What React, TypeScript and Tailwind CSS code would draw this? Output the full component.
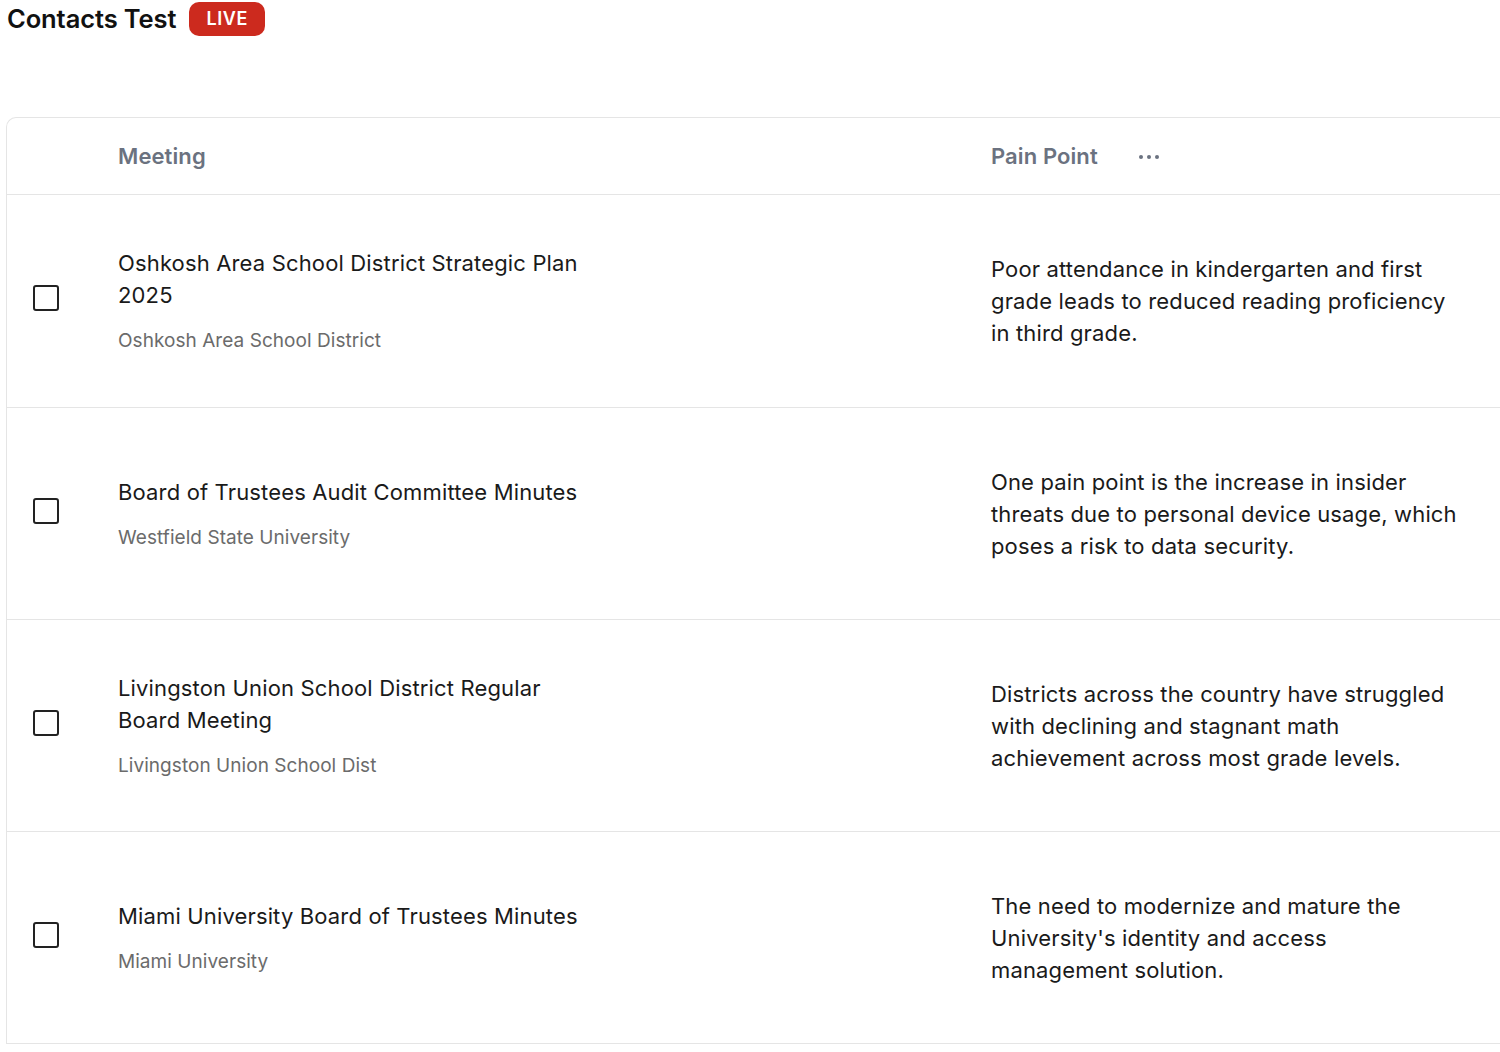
import React from "react";

const rows = [
  {
    title: "Oshkosh Area School District Strategic Plan 2025",
    org: "Oshkosh Area School District",
    pain: "Poor attendance in kindergarten and first grade leads to reduced reading proficiency in third grade.",
  },
  {
    title: "Board of Trustees Audit Committee Minutes",
    org: "Westfield State University",
    pain: "One pain point is the increase in insider threats due to personal device usage, which poses a risk to data security.",
  },
  {
    title: "Livingston Union School District Regular Board Meeting",
    org: "Livingston Union School Dist",
    pain: "Districts across the country have struggled with declining and stagnant math achievement across most grade levels.",
  },
  {
    title: "Miami University Board of Trustees Minutes",
    org: "Miami University",
    pain: "The need to modernize and mature the University's identity and access management solution.",
  },
];

export default function App() {
  return (
    <div className="min-h-[1052px] bg-white overflow-hidden" style={{ fontFamily: "Inter, 'Noto Sans', sans-serif" }}>
      <div className="flex items-center gap-[13px] pl-[7px] h-[38px]">
        <h1 className="text-[25.5px] font-semibold text-[#111] leading-none tracking-[-0.1px]">Contacts Test</h1>
        <span className="bg-[#cc2a1e] text-white text-[18px] font-semibold leading-none rounded-[10px] px-[17px] h-[34px] flex items-center tracking-[0.6px]">
          LIVE
        </span>
      </div>
      <div className="ml-[6px] mt-[79px] w-[1600px] border-l border-t border-[#e5e5e5] rounded-tl-[10px]">
        <div className="grid grid-cols-[111px_873px_1fr] h-[77px] items-center border-b border-[#e5e5e5]">
          <div />
          <div className="text-[22px] font-semibold text-[#6b7280] tracking-[0.1px]">Meeting</div>
          <div className="flex items-center gap-[40px]">
            <span className="text-[22px] font-semibold text-[#6b7280] tracking-[0.1px]">Pain Point</span>
            <svg width="22" height="6" viewBox="0 0 22 6" className="mt-[1px]">
              <circle cx="3" cy="3" r="2" fill="#6b7280" />
              <circle cx="11" cy="3" r="2" fill="#6b7280" />
              <circle cx="19" cy="3" r="2" fill="#6b7280" />
            </svg>
          </div>
        </div>
        {rows.map((r, i) => (
          <div
            key={r.title}
            className={`grid grid-cols-[111px_873px_1fr] items-center border-b border-[#e5e5e5] ${i === 0 ? "h-[213px]" : "h-[212px]"}`}
          >
            <div className="pl-[26px] pb-[6px]">
              <div className="w-[26px] h-[26px] border-2 border-[#222] rounded-[3px]" />
            </div>
            <div className="max-w-[475px]">
              <div className="text-[22px] leading-[32px] text-[#1a1a1a] tracking-[0.15px]">{r.title}</div>
              <div className="text-[19px] leading-[28px] text-[#6b6b6b] mt-[16px] tracking-[0.05px]">{r.org}</div>
            </div>
            <div className="max-w-[472px] text-[22px] leading-[32px] text-[#1a1a1a] tracking-[0.15px]">{r.pain}</div>
          </div>
        ))}
      </div>
    </div>
  );
}
